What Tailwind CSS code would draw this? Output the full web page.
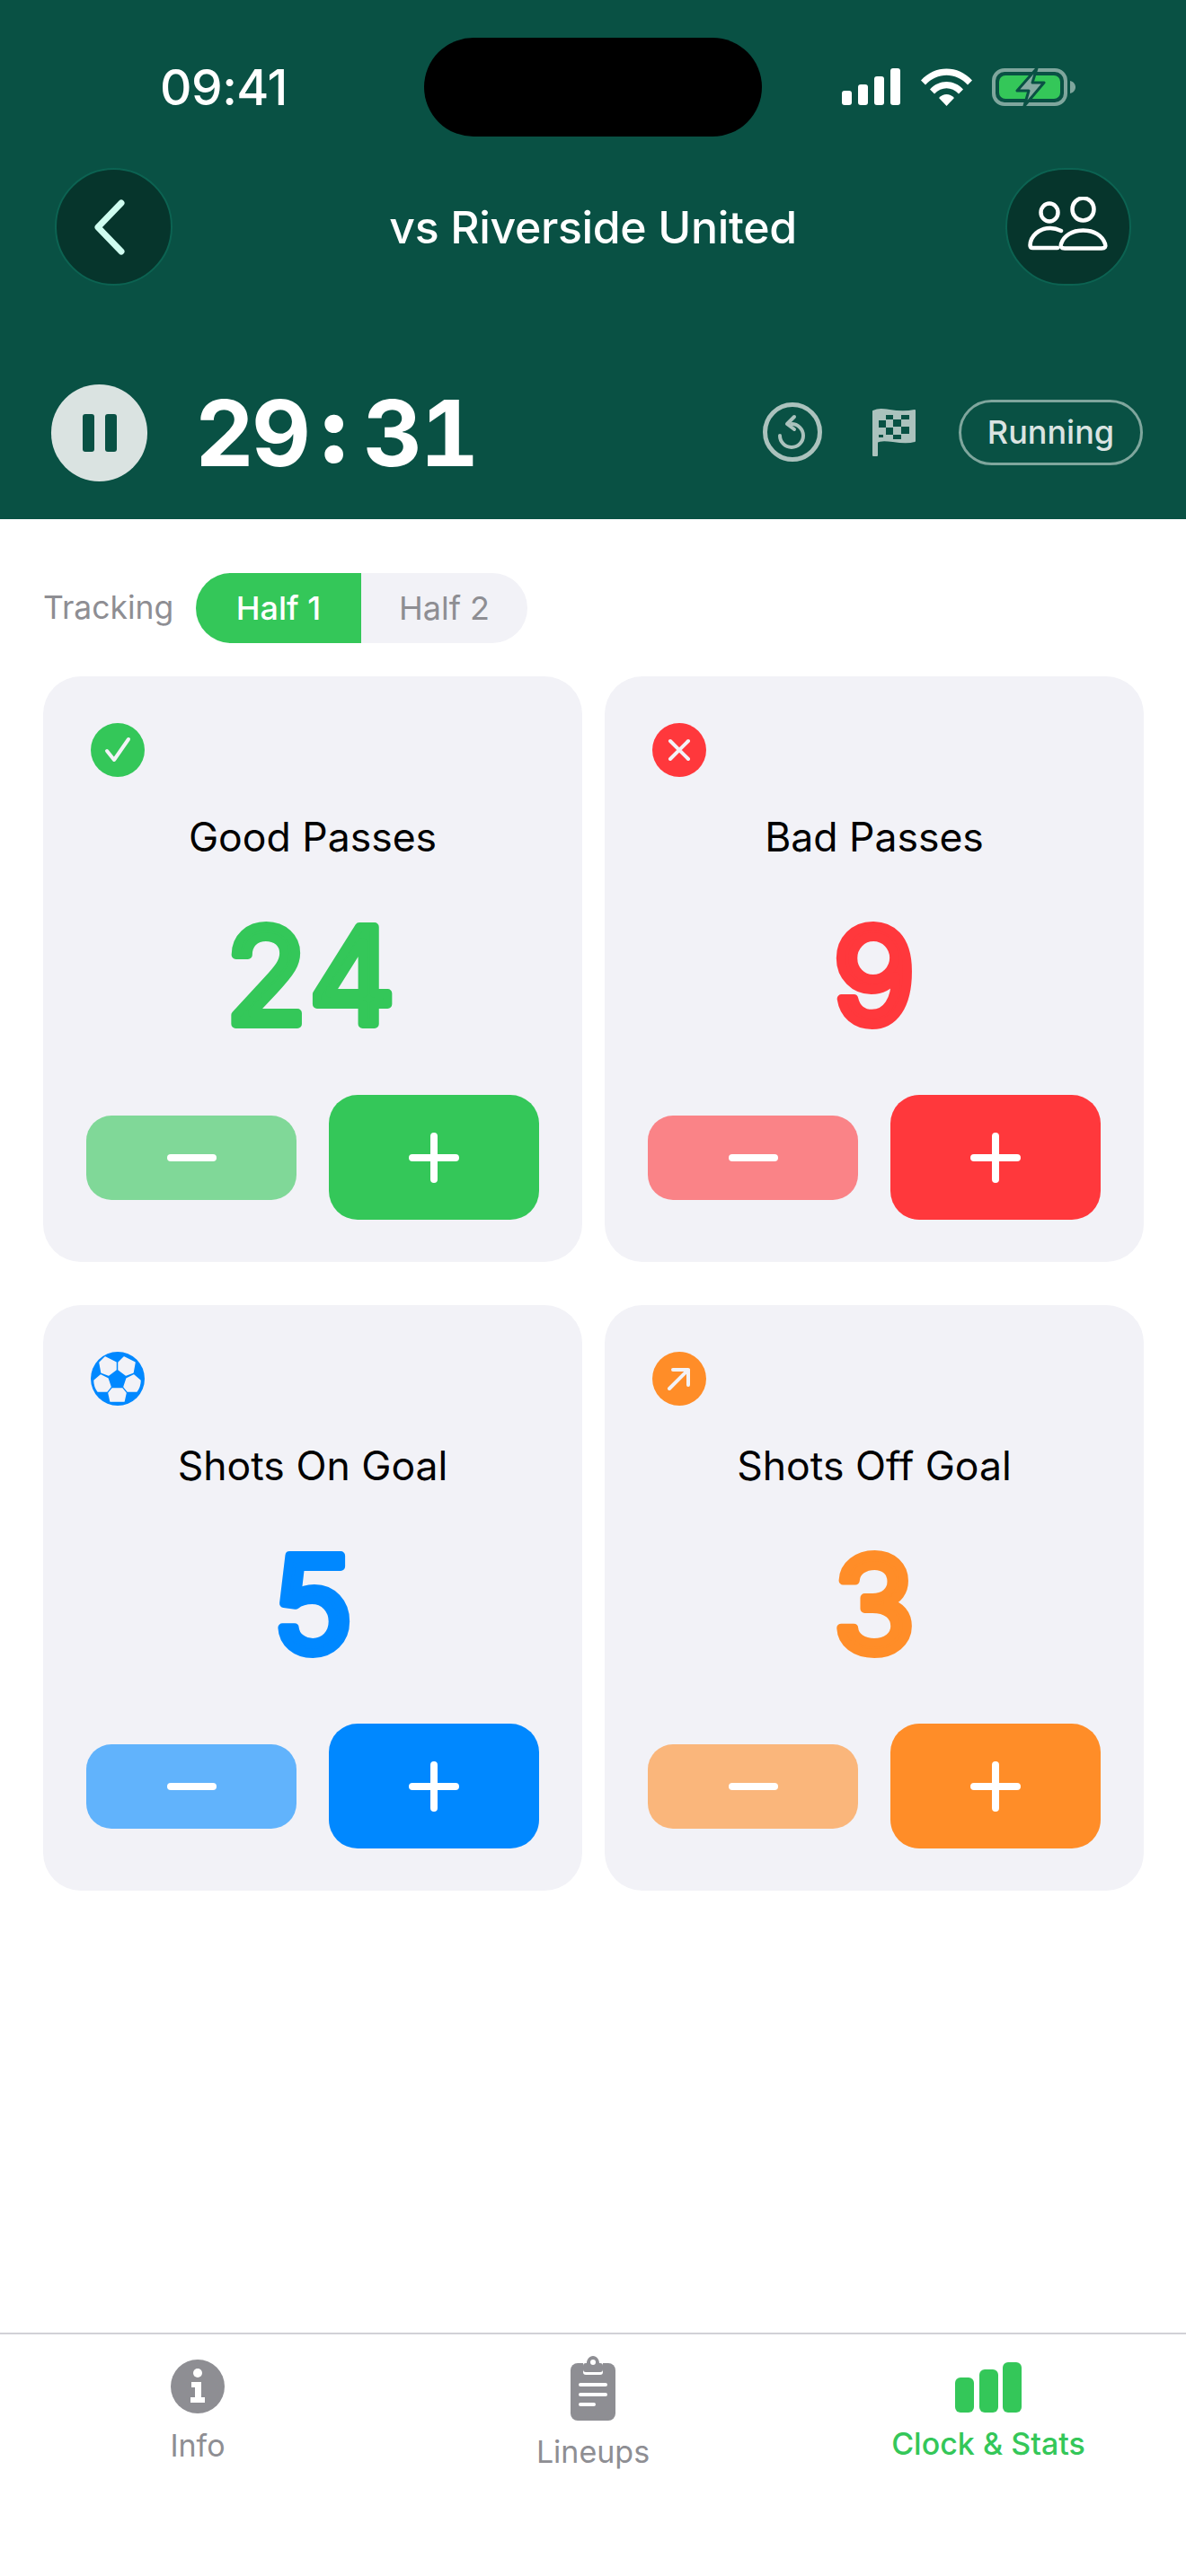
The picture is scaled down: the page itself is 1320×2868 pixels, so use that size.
<!doctype html>
<html>
<head>
<meta charset="utf-8">
<script src="https://cdn.jsdelivr.net/npm/@tailwindcss/browser@4"></script>
</head>
<body class="w-[1320px] h-[2868px] bg-white overflow-hidden font-['Inter',sans-serif]">
<div class="flex flex-col h-full">

  <header class="h-[578px] bg-[#095144] shrink-0 flex flex-col">
    <!-- status bar -->
    <div class="h-[110px] mt-[42px] pl-[178px] flex items-center">
      <span class="text-white text-[55px] font-medium leading-none w-[294px] shrink-0 tracking-[-0.5px]">09:41</span>
      <div class="w-[376px] h-[110px] shrink-0 rounded-full bg-black"></div>
      <div class="flex items-center ml-[89px] gap-[23px] shrink-0">
        <svg width="65" height="42" viewBox="0 0 65 42" fill="#fff"><rect x="0" y="25" width="11" height="16" rx="3"/><rect x="18" y="18" width="11" height="23" rx="3"/><rect x="36" y="9" width="11" height="32" rx="3"/><rect x="54" y="0" width="11" height="41" rx="3"/></svg>
        <svg width="57" height="42" viewBox="0 0 57 42" fill="#fff"><path d="M0 13.500C15-4 42-4 57 13.500L52 18.500C39 4 18 4 5 18.500Z"/><path d="M10 23.500C20 12 37 12 47 23.500L42 28.500C34 20 23 20 15 28.500Z"/><path d="M20 33C25 27.500 32 27.500 37 33L28.500 42Z"/></svg>
        <svg class="-ml-[1px]" width="94" height="44" viewBox="0 0 94 44"><rect x="2" y="3" width="80" height="38" rx="12" fill="none" stroke="#7fa69d" stroke-width="4"/><rect x="8" y="9" width="68" height="26" rx="7" fill="#34c759"/><path d="M87 15c4 1 6 4 6 7s-2 6-6 7z" fill="#7fa69d"/><path d="M50 1L28 26h13L36 43l22-26H45z" fill="#86aaa2" stroke="#095144" stroke-width="3" stroke-linejoin="round"/></svg>
      </div>
    </div>

    <!-- nav -->
    <div class="mt-[35px] pl-[61px] pr-[61px] h-[131px] flex items-center justify-between">
      <button class="w-[131px] h-[131px] rounded-full bg-[#06352c] border-2 border-[#0c6352] flex items-center justify-center">
        <svg width="36" height="64" viewBox="0 0 36 64" fill="none" class="-ml-[9px]"><path d="M31 5L5 32l26 27" stroke="#cffdf0" stroke-width="7" stroke-linecap="round" stroke-linejoin="round"/></svg>
      </button>
      <h1 class="ml-[9px] text-white text-[50px] font-medium leading-none tracking-[-0.35px]">vs Riverside United</h1>
      <button class="w-[140px] h-[131px] rounded-full bg-[#06352c] border-2 border-[#0c6352] flex items-center justify-center">
        <svg class="-mt-[8px]" width="90" height="60" viewBox="0 0 90 60" fill="none" stroke="#fff" stroke-width="4.500" stroke-linecap="round" stroke-linejoin="round"><ellipse cx="24" cy="17.500" rx="9.500" ry="10"/><ellipse cx="61.500" cy="14" rx="12" ry="12.500"/><path d="M37 38c-4-2-8-3-12-3C12 35 3 44 2.500 54c0 2 1 3 3 3H33"/><path d="M41 57.500c-4 0-5-2-4-5 3-9 12-15 24.500-15S83 43.500 86 52.500c1 3 0 5-4 5z"/></svg>
      </button>
    </div>

    <!-- timer -->
    <div class="mt-[110px] pl-[57px] pr-[48px] flex items-center">
      <button class="w-[107px] h-[108px] rounded-full bg-[#dae3e1] flex items-center justify-center gap-[12px]">
        <span class="block w-[13px] h-[42px] rounded-[3px] bg-[#095144]"></span>
        <span class="block w-[13px] h-[42px] rounded-[3px] bg-[#095144]"></span>
      </button>
      <div class="ml-[53px] flex items-center text-white font-bold text-[102px] leading-none tracking-[-3px] tabular-nums">
        <span>29</span><span class="ml-[15px] mr-[22px] -mt-[8px] font-black">:</span><span>31</span>
      </div>
      <div class="ml-auto -mt-[2px] flex items-center">
        <svg width="66" height="66" viewBox="0 0 66 66" fill="none" stroke="#abc2bd" stroke-linecap="round" stroke-linejoin="round"><circle cx="33" cy="33" r="30.500" stroke-width="5"/><path d="M32 24a13 13 0 1 1-13 13" stroke-width="4"/><path d="M35 16l-8 8 8 6" stroke-width="4"/></svg>
        <svg class="ml-[55px]" width="50" height="54" viewBox="0 0 50 54"><path d="M2 4C14-2 24 8 48 3v34C32 42 14 32 6 38v15H2z" fill="#abc2bd" stroke="#abc2bd" stroke-width="2" stroke-linejoin="round"/><g fill="#095144"><rect x="8" y="14" width="8" height="8"/><rect x="24" y="13" width="9" height="8"/><rect x="16" y="22" width="8" height="8"/><rect x="33" y="21" width="9" height="8"/><rect x="8" y="30" width="5" height="3"/><rect x="24" y="30" width="9" height="5"/><rect x="16" y="8" width="8" height="5"/><rect x="33" y="8" width="9" height="5"/></g></svg>
        <span class="ml-[47px] w-[205px] h-[73px] rounded-full border-[3px] border-[#7fa69d] text-[#dae3e1] text-[36px] font-medium flex items-center justify-center">Running</span>
      </div>
    </div>
  </header>

  <main class="flex-1 pl-[48px] pr-[47px] pt-[60px]">
    <div class="flex items-center h-[78px]">
      <span class="text-[#8e8e93] text-[35.500px] w-[170px]">Tracking</span>
      <div class="flex h-[78px] w-[369px] rounded-full bg-[#f2f2f7] overflow-hidden text-[36px]">
        <span class="w-[184px] bg-[#34c759] text-white font-medium flex items-center justify-center">Half 1</span>
        <span class="w-[185px] text-[#8e8e93] flex items-center justify-center">Half 2</span>
      </div>
    </div>

    <div class="grid grid-cols-2 gap-x-[25px] gap-y-[48px] mt-[37px]">

      <!-- Good -->
      <section class="h-[652px] rounded-[42px] bg-[#f2f2f7] px-[48px] pt-[52px] flex flex-col">
        <div class="ml-[5px] w-[60px] h-[60px] rounded-full bg-[#34c759] flex items-center justify-center">
          <svg width="30" height="30" viewBox="0 0 30 30" fill="none"><path d="M3 16l8 10L27 3" stroke="#f2f2f7" stroke-width="4" stroke-linecap="round" stroke-linejoin="round"/></svg>
        </div>
        <div class="mt-[40px] text-center text-black text-[44.500px] leading-[54px]">Good Passes</div>
        <svg class="mx-auto overflow-visible" width="504" height="240" viewBox="0 0 504 240"><text x="252" y="181" text-anchor="middle" font-family="Inter" font-weight="400" font-size="148" letter-spacing="5" fill="#34c759" stroke="#34c759" stroke-width="10" stroke-linejoin="round">24</text></svg>
        <div class="mt-[20px] flex items-center justify-between">
          <button class="w-[234px] h-[94px] rounded-[28px] bg-[#34c759]/60 flex items-center justify-center"><span class="block w-[55px] h-[8px] rounded-full bg-white"></span></button>
          <button class="w-[234px] h-[139px] rounded-[32px] bg-[#34c759] flex items-center justify-center"><svg width="56" height="56" viewBox="0 0 56 56"><path d="M28 4v48M4 28h48" stroke="#fff" stroke-width="8" stroke-linecap="round"/></svg></button>
        </div>
      </section>

      <!-- Bad -->
      <section class="h-[652px] rounded-[42px] bg-[#f2f2f7] px-[48px] pt-[52px] flex flex-col">
        <div class="ml-[5px] w-[60px] h-[60px] rounded-full bg-[#ff383c] flex items-center justify-center">
          <svg width="26" height="26" viewBox="0 0 26 26" fill="none"><path d="M3 3l20 20M23 3L3 23" stroke="#f2f2f7" stroke-width="4" stroke-linecap="round"/></svg>
        </div>
        <div class="mt-[40px] text-center text-black text-[44.500px] leading-[54px]">Bad Passes</div>
        <svg class="mx-auto overflow-visible" width="504" height="240" viewBox="0 0 504 240"><text x="252" y="181" text-anchor="middle" font-family="Inter" font-weight="400" font-size="148" fill="#ff383c" stroke="#ff383c" stroke-width="10" stroke-linejoin="round">9</text></svg>
        <div class="mt-[20px] flex items-center justify-between">
          <button class="w-[234px] h-[94px] rounded-[28px] bg-[#ff383c]/60 flex items-center justify-center"><span class="block w-[55px] h-[8px] rounded-full bg-white"></span></button>
          <button class="w-[234px] h-[139px] rounded-[32px] bg-[#ff383c] flex items-center justify-center"><svg width="56" height="56" viewBox="0 0 56 56"><path d="M28 4v48M4 28h48" stroke="#fff" stroke-width="8" stroke-linecap="round"/></svg></button>
        </div>
      </section>

      <!-- On goal -->
      <section class="h-[652px] rounded-[42px] bg-[#f2f2f7] px-[48px] pt-[52px] flex flex-col">
        <div class="ml-[5px] w-[60px] h-[60px] rounded-full bg-[#0088ff]">
          <svg width="60" height="60" viewBox="0 0 60 60" fill="#f2f2f7" stroke="#f2f2f7" stroke-width="1.500" stroke-linejoin="round"><path d="M16 6l12 6v8l-8 6-8-3-2-11z"/><path d="M37 6l12 6-2 11-8 3-8-6v-8z"/><path d="M11 26l8 4 3 9-4 5H8C5 40 4 36 4 32z"/><path d="M48 26l-8 4-3 9 4 5h10c3-4 4-8 4-12z"/><path d="M24 41h11l4 5-2 9H22l-2-9z"/></svg>
        </div>
        <div class="mt-[40px] text-center text-black text-[44.500px] leading-[54px]">Shots On Goal</div>
        <svg class="mx-auto overflow-visible" width="504" height="240" viewBox="0 0 504 240"><text x="252" y="181" text-anchor="middle" font-family="Inter" font-weight="400" font-size="148" fill="#0088ff" stroke="#0088ff" stroke-width="10" stroke-linejoin="round">5</text></svg>
        <div class="mt-[20px] flex items-center justify-between">
          <button class="w-[234px] h-[94px] rounded-[28px] bg-[#0088ff]/60 flex items-center justify-center"><span class="block w-[55px] h-[8px] rounded-full bg-white"></span></button>
          <button class="w-[234px] h-[139px] rounded-[32px] bg-[#0088ff] flex items-center justify-center"><svg width="56" height="56" viewBox="0 0 56 56"><path d="M28 4v48M4 28h48" stroke="#fff" stroke-width="8" stroke-linecap="round"/></svg></button>
        </div>
      </section>

      <!-- Off goal -->
      <section class="h-[652px] rounded-[42px] bg-[#f2f2f7] px-[48px] pt-[52px] flex flex-col">
        <div class="ml-[5px] w-[60px] h-[60px] rounded-full bg-[#ff8d28] flex items-center justify-center">
          <svg width="30" height="30" viewBox="0 0 30 30" fill="none"><path d="M4 26L25 5M8 5h17v17" stroke="#f2f2f7" stroke-width="4" stroke-linecap="round" stroke-linejoin="round"/></svg>
        </div>
        <div class="mt-[40px] text-center text-black text-[44.500px] leading-[54px]">Shots Off Goal</div>
        <svg class="mx-auto overflow-visible" width="504" height="240" viewBox="0 0 504 240"><text x="252" y="181" text-anchor="middle" font-family="Inter" font-weight="400" font-size="148" fill="#ff8d28" stroke="#ff8d28" stroke-width="10" stroke-linejoin="round">3</text></svg>
        <div class="mt-[20px] flex items-center justify-between">
          <button class="w-[234px] h-[94px] rounded-[28px] bg-[#ff8d28]/60 flex items-center justify-center"><span class="block w-[55px] h-[8px] rounded-full bg-white"></span></button>
          <button class="w-[234px] h-[139px] rounded-[32px] bg-[#ff8d28] flex items-center justify-center"><svg width="56" height="56" viewBox="0 0 56 56"><path d="M28 4v48M4 28h48" stroke="#fff" stroke-width="8" stroke-linecap="round"/></svg></button>
        </div>
      </section>
    </div>
  </main>

  <!-- tab bar -->
  <nav class="h-[271px] shrink-0 border-t-2 border-[#d1d1d6] grid grid-cols-3 items-start text-[34px] leading-[40px]">
    <div class="flex flex-col items-center pt-[28px] text-[#8e8e93]">
      <svg width="60" height="60" viewBox="0 0 60 60"><circle cx="30" cy="30" r="30" fill="#8e8e93"/><circle cx="30" cy="15" r="5" fill="#fff"/><path d="M23 25h11v17h4v6H22v-6h5V31h-4z" fill="#fff"/></svg>
      <span class="mt-[16px]">Info</span>
    </div>
    <div class="flex flex-col items-center pt-[24px] text-[#8e8e93]">
      <svg width="50" height="72" viewBox="0 0 50 72" fill="none"><path d="M8 8h34a8 8 0 0 1 8 8v48a8 8 0 0 1-8 8H8a8 8 0 0 1-8-8V16a8 8 0 0 1 8-8z" fill="#8e8e93"/><path d="M14 3h22v16a3 3 0 0 1-3 3H17a3 3 0 0 1-3-3z" fill="#fff" transform="translate(0 -1)"/><path d="M18 8c0-4 3-8 7-8s7 4 7 8h1a3 3 0 0 1 3 3v4a3 3 0 0 1-3 3H17a3 3 0 0 1-3-3v-4a3 3 0 0 1 3-3z" fill="#8e8e93"/><circle cx="25" cy="7" r="3" fill="#fff"/><path d="M11 32h28M11 43h28M11 54h15" stroke="#fff" stroke-width="4" stroke-linecap="round"/></svg>
      <span class="mt-[15px]">Lineups</span>
    </div>
    <div class="flex flex-col items-center pt-[31px] text-[#34c759]">
      <svg width="74" height="56" viewBox="0 0 74 56" fill="#34c759"><rect x="0" y="17" width="21" height="39" rx="6"/><rect x="27" y="8" width="21" height="48" rx="6"/><rect x="53" y="0" width="21" height="56" rx="6"/></svg>
      <span class="mt-[15px] font-medium">Clock &amp; Stats</span>
    </div>
  </nav>
</div>
</body>
</html>
